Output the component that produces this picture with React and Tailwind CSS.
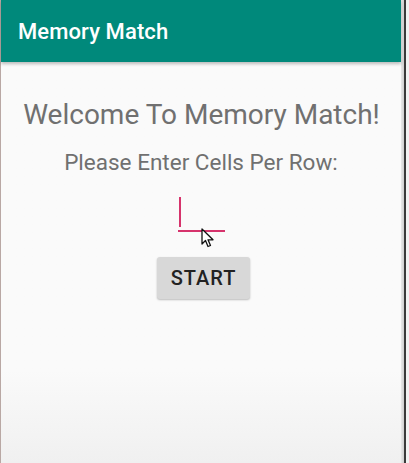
export default function App() {
  return (
    <div className="relative w-[409px] h-[463px] overflow-hidden bg-[#fafafa]" style={{ fontFamily: "Roboto, 'Liberation Sans', sans-serif" }}>
      <div className="flex h-full w-full">
        <div className="w-[1px] bg-[#b9a8a4]" />
        <div className="flex-1 flex flex-col bg-gradient-to-b from-[#fafafa] from-80% to-[#f0f0f0]">
          <div className="h-[62px] bg-[#00897b] flex items-center pl-[17px] shadow-[0_2px_3px_rgba(0,0,0,0.25)] z-10">
            <span className="text-white text-[22px] font-medium tracking-[0.1px]">Memory Match</span>
          </div>
          <div className="flex flex-col items-center">
            <div className="mt-[37px] text-[28px] leading-[32px] text-[#707070] pl-[1px]">Welcome To Memory Match!</div>
            <div className="mt-[18px] text-[22.5px] leading-[26px] text-[#707070]">Please Enter Cells Per Row:</div>
            <div className="relative mt-[19px] w-[47px] h-[39px]">
              <div className="absolute left-[1px] top-[3px] w-[2px] h-[30px] bg-[#d6336c]" />
              <div className="absolute left-0 bottom-[1px] w-[47px] h-[2px] bg-[#d6336c]" />
              <svg className="absolute left-[23px] top-[34px]" width="14" height="21" viewBox="0 0 14 21">
                <path d="M1 1 L1 16 L4.5 12.5 L7 18.5 L9.5 17.5 L7 11.8 L12 11.8 Z" fill="#fff" stroke="#111" strokeWidth="1.3" strokeLinejoin="round" />
              </svg>
            </div>
            <div className="mt-[24px] w-[93px] h-[42px] rounded-[3px] bg-[#d8d8d8] shadow-[0_1px_2px_rgba(0,0,0,0.25)] flex items-center justify-center ml-[4px]">
              <span className="text-[20px] font-medium text-[#222] tracking-[1px] pl-[1px]">START</span>
            </div>
          </div>
        </div>
        <div className="w-[3px] bg-gradient-to-r from-[#e8e8e8] to-[#cfcfcf]" />
        <div className="w-[2px] bg-[#3a3a3a]" />
        <div className="w-[3px] bg-[#f2f2f2]" />
      </div>
    </div>
  );
}
